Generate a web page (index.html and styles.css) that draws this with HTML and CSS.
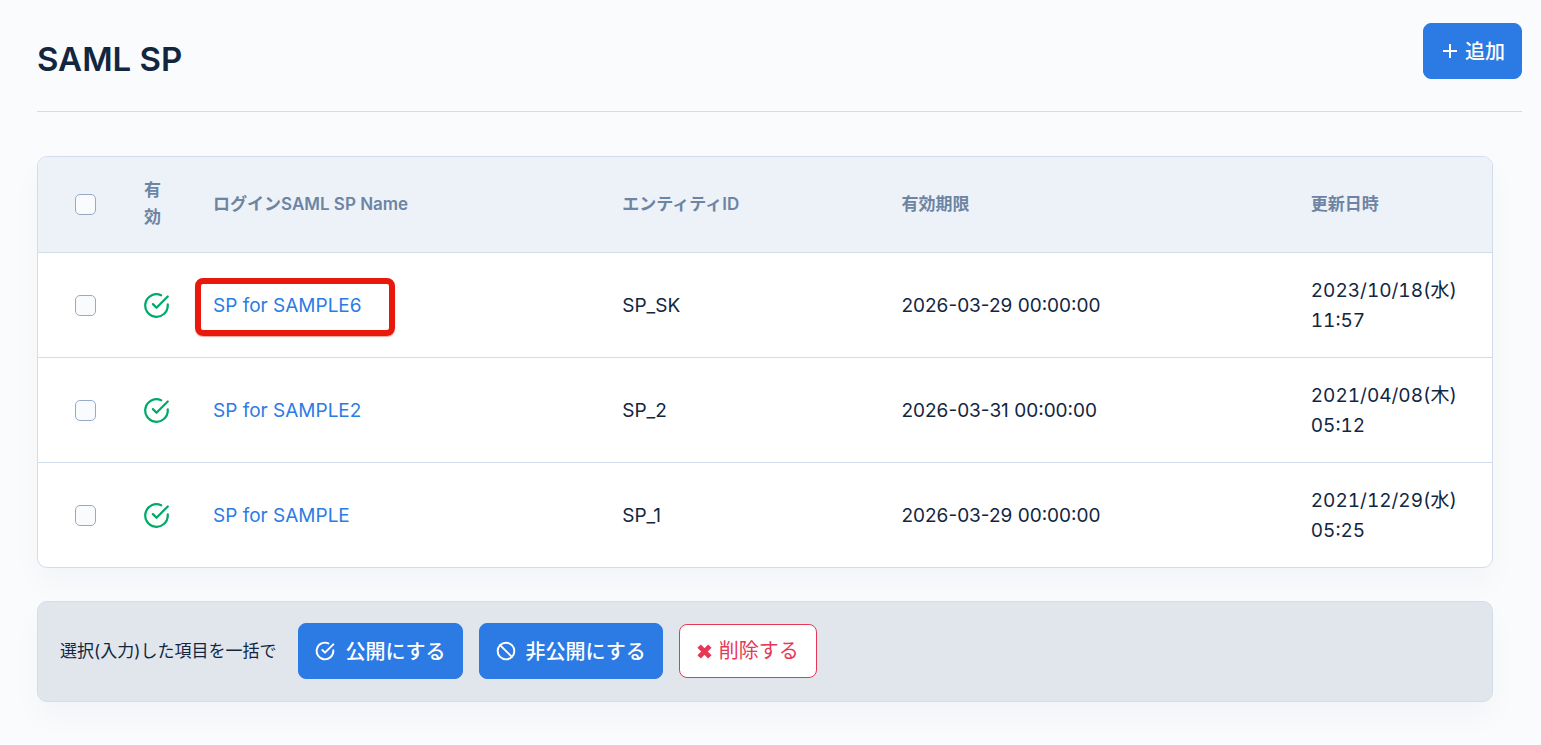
FILE: index.html
```html
<!DOCTYPE html>
<html lang="ja">
<head>
<meta charset="utf-8">
<meta name="viewport" content="width=device-width, initial-scale=1">
<title>SAML SP</title>
<link rel="stylesheet" href="styles.css">
</head>
<body>
<svg class="sprite" aria-hidden="true">
  <symbol id="check-circle" viewBox="0 0 24 24"><path d="M22 11.1V12a10 10 0 1 1-5.9-9.1"/><path d="M22 4 12 14l-3.2-3.2"/></symbol>
  <symbol id="slash" viewBox="0 0 24 24"><circle cx="12" cy="12" r="10"/><path d="m4.9 4.9 14.2 14.2"/></symbol>
  <symbol id="plus" viewBox="0 0 14 14"><path d="M7 0v14M0 7h14"/></symbol>
  <symbol id="cross" viewBox="0 0 14 14"><path d="m2 2 10 10M12 2 2 12"/></symbol>
</svg>
<main class="page">
  <header class="page-header">
    <h1 class="title">SAML SP</h1>
    <button type="button" class="btn btn-primary btn-add"><svg class="icon-plus"><use href="#plus"/></svg>追加</button>
  </header>
  <form class="content">
    <div class="card">
      <table class="list">
        <colgroup><col class="col-check"><col class="col-status"><col class="col-name"><col class="col-entity"><col class="col-expiry"><col></colgroup>
        <thead>
          <tr>
            <th scope="col"><input type="checkbox" class="check" aria-label="すべて選択"></th>
            <th scope="col">有効</th>
            <th scope="col">ログインSAML SP Name</th>
            <th scope="col">エンティティID</th>
            <th scope="col">有効期限</th>
            <th scope="col">更新日時</th>
          </tr>
        </thead>
        <tbody>
          <tr>
            <td class="control"><input type="checkbox" class="check" aria-label="SP for SAMPLE6"></td>
            <td class="control"><svg class="icon-status" role="img" aria-label="有効"><use href="#check-circle"/></svg></td>
            <td class="marked"><a href="#">SP for SAMPLE6</a></td>
            <td>SP_SK</td>
            <td>2026-03-29 00:00:00</td>
            <td class="updated">2023/10/18(水) 11:57</td>
          </tr>
          <tr>
            <td class="control"><input type="checkbox" class="check" aria-label="SP for SAMPLE2"></td>
            <td class="control"><svg class="icon-status" role="img" aria-label="有効"><use href="#check-circle"/></svg></td>
            <td><a href="#">SP for SAMPLE2</a></td>
            <td>SP_2</td>
            <td>2026-03-31 00:00:00</td>
            <td class="updated">2021/04/08(木) 05:12</td>
          </tr>
          <tr>
            <td class="control"><input type="checkbox" class="check" aria-label="SP for SAMPLE"></td>
            <td class="control"><svg class="icon-status" role="img" aria-label="有効"><use href="#check-circle"/></svg></td>
            <td><a href="#">SP for SAMPLE</a></td>
            <td>SP_1</td>
            <td>2026-03-29 00:00:00</td>
            <td class="updated">2021/12/29(水) 05:25</td>
          </tr>
        </tbody>
      </table>
    </div>
    <div class="card bulk">
      <span class="bulk-label">選択(入力)した項目を一括で</span>
      <button type="button" class="btn btn-primary"><svg class="icon"><use href="#check-circle"/></svg>公開にする</button>
      <button type="button" class="btn btn-primary"><svg class="icon"><use href="#slash"/></svg>非公開にする</button>
      <button type="button" class="btn btn-danger"><svg class="icon-cross"><use href="#cross"/></svg>削除する</button>
    </div>
  </form>
</main>
</body>
</html>
```
FILE: styles.css
```css
*,
*::after {
  box-sizing: border-box;
}

body {
  margin: 0;
  background: #f9fbfd;
  color: #12263f;
  font: 19px/30px Inter, "Noto Sans CJK JP", sans-serif;
}

svg {
  fill: none;
  stroke: currentColor;
  stroke-width: 2;
  stroke-linecap: round;
  stroke-linejoin: round;
  flex: none;
}

.sprite {
  display: none;
}

.page {
  padding: 0 19px 43px 37px;
}

.page-header {
  display: flex;
  justify-content: space-between;
  align-items: flex-start;
  padding: 23px 0 32px;
  border-bottom: 1px solid #d2ddec;
}

.title {
  margin: 0;
  padding-top: 16px;
  font-size: 33px;
  line-height: 40px;
  font-weight: 600;
}

.btn {
  display: flex;
  align-items: center;
  justify-content: center;
  border: 1px solid;
  border-radius: 8px;
  font-family: inherit;
  font-size: 20px;
  line-height: 30px;
  cursor: pointer;
}

.btn-primary {
  gap: 10px;
  padding: 13px 16px 11px;
  background: #2c7be5;
  border-color: #2c7be5;
  color: #fff;
  font-weight: 500;
}

.btn-add {
  gap: 8px;
  padding: 13px 16px 11px 19px;
}

.btn-danger {
  gap: 7px;
  padding: 11px 17px;
  background: #fff;
  border-color: #e63757;
  color: #e63757;
}

.icon {
  width: 20px;
  height: 20px;
  margin-bottom: 2px;
  stroke-width: 2.3;
}

.icon-plus {
  width: 14px;
  height: 14px;
  margin-bottom: 2px;
  stroke-linecap: butt;
}

.icon-cross {
  width: 15px;
  height: 15px;
  stroke-width: 4.5;
  stroke-linecap: butt;
}

.icon-status {
  display: block;
  width: 27px;
  height: 27px;
  color: #00a968;
}

.content {
  display: flex;
  flex-direction: column;
  gap: 33px;
  margin: 44px 29px 0 0;
}

.card {
  border: 1px solid #d2ddec;
  border-radius: 10px;
  background: #fff;
  box-shadow: 0 15px 30px rgba(18, 38, 63, 0.03);
}

.list {
  width: 100%;
  table-layout: fixed;
  border-collapse: separate;
  border-spacing: 0;
}

.col-check {
  width: 82px;
}

.col-status {
  width: 69px;
}

.col-name,
.col-expiry {
  width: 28.15%;
}

.col-entity {
  width: 19.2%;
}

.list th,
.list td {
  padding: 23px 24px 21px;
  text-align: left;
  vertical-align: middle;
}

.list .control {
  padding: 22px 18px 22px 23px;
}

.list th {
  padding: 20px 24px 21px;
  background: #edf2f9;
  color: #6e84a3;
  font-size: 17px;
  line-height: 27px;
  font-weight: 600;
}

.list th:first-child {
  padding-left: 37px;
  border-top-left-radius: 9px;
}

.list th:last-child {
  border-top-right-radius: 9px;
}

.list td:first-child {
  padding-left: 37px;
}

.list th,
.list tr:not(:last-child) td {
  border-bottom: 1px solid #d2ddec;
}

.list a {
  color: #2c7be5;
  text-decoration: none;
}

.updated {
  font-variant-numeric: tabular-nums;
}

.marked {
  position: relative;
}

.marked::after {
  content: "";
  position: absolute;
  top: 25px;
  left: 6px;
  width: 200px;
  height: 58px;
  border: 6px solid #e8190c;
  border-radius: 8px;
  box-shadow: 0 1px 1px rgba(232, 25, 12, 0.4);
  pointer-events: none;
}

.check {
  appearance: none;
  display: block;
  width: 21px;
  height: 21px;
  margin: 0;
  border: 1px solid #95aac9;
  border-radius: 5px;
  background: #f9fbfd;
}

.check:checked {
  background: #2c7be5;
}

.bulk {
  display: flex;
  align-items: center;
  gap: 16px;
  padding: 21px 22px 22px;
  background: #e1e6ed;
}

.bulk-label {
  margin-right: 6px;
  font-size: 17px;
}
```
